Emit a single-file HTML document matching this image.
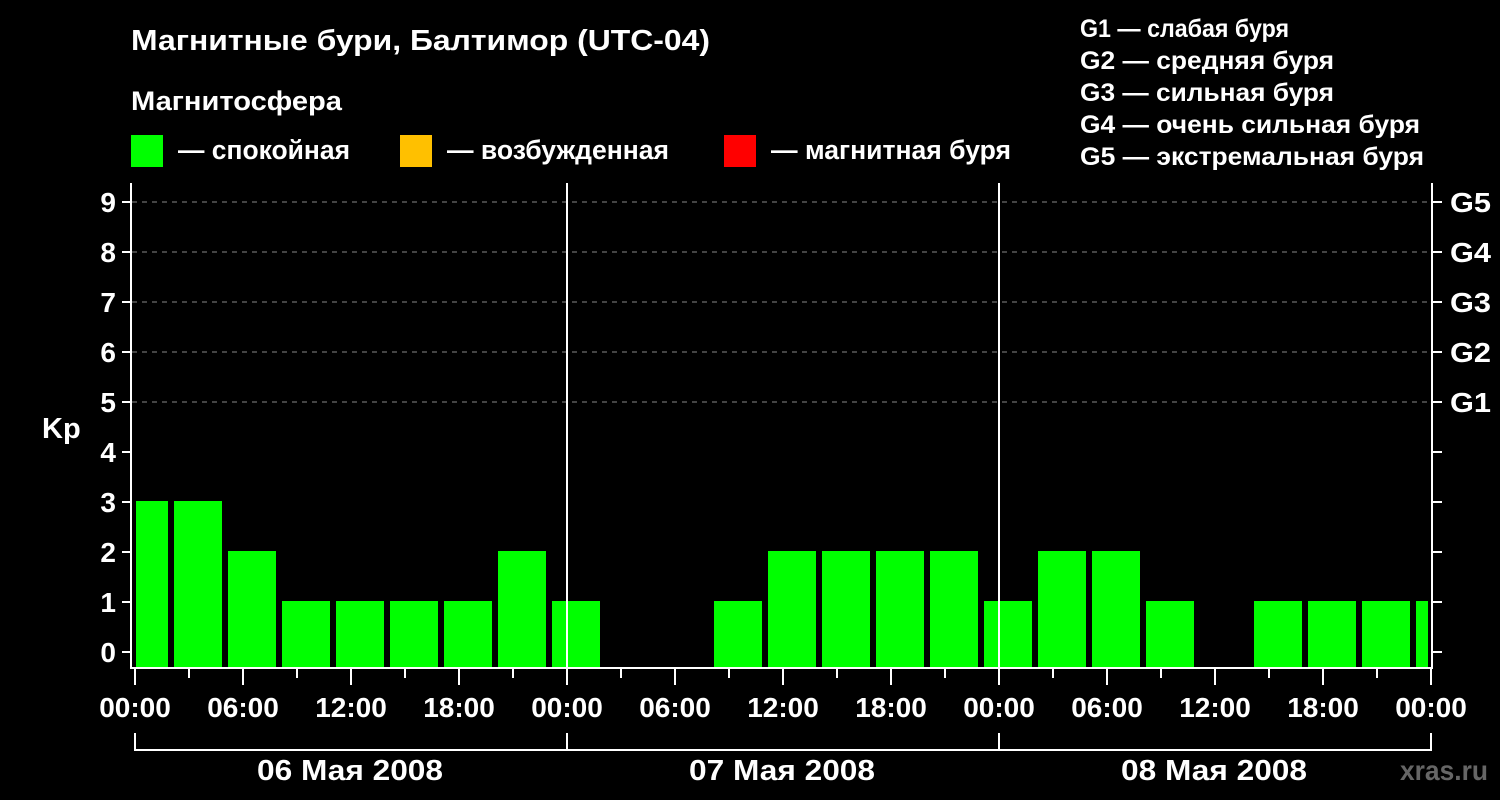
<!DOCTYPE html>
<html><head><meta charset="utf-8"><style>html,body{margin:0;padding:0;background:#000;width:1500px;height:800px;overflow:hidden}</style></head><body>
<svg width="1500" height="800" xmlns="http://www.w3.org/2000/svg" font-family="Liberation Sans, sans-serif" font-weight="bold" fill="#fff">
<rect width="1500" height="800" fill="#000"/>
<text x="131" y="50" font-size="29" textLength="579" lengthAdjust="spacingAndGlyphs">Магнитные бури, Балтимор (UTC-04)</text>
<text x="131" y="110" font-size="27" textLength="211" lengthAdjust="spacingAndGlyphs">Магнитосфера</text>
<rect x="131" y="135" width="32" height="32" fill="#00ff00"/>
<text x="178" y="159" font-size="27" textLength="172" lengthAdjust="spacingAndGlyphs">— спокойная</text>
<rect x="400" y="135" width="32" height="32" fill="#ffc000"/>
<text x="447" y="159" font-size="27" textLength="222" lengthAdjust="spacingAndGlyphs">— возбужденная</text>
<rect x="724" y="135" width="32" height="32" fill="#ff0000"/>
<text x="771" y="159" font-size="27" textLength="240" lengthAdjust="spacingAndGlyphs">— магнитная буря</text>
<g font-size="25">
<text x="1080" y="37" textLength="209" lengthAdjust="spacingAndGlyphs">G1 — слабая буря</text>
<text x="1080" y="69" textLength="254" lengthAdjust="spacingAndGlyphs">G2 — средняя буря</text>
<text x="1080" y="101" textLength="254" lengthAdjust="spacingAndGlyphs">G3 — сильная буря</text>
<text x="1080" y="133" textLength="340" lengthAdjust="spacingAndGlyphs">G4 — очень сильная буря</text>
<text x="1080" y="165" textLength="344" lengthAdjust="spacingAndGlyphs">G5 — экстремальная буря</text>
</g>
<g stroke="#888" stroke-width="1" stroke-dasharray="5,5">
<line x1="132" y1="202" x2="1432" y2="202"/><line x1="132" y1="252" x2="1432" y2="252"/><line x1="132" y1="302" x2="1432" y2="302"/><line x1="132" y1="352" x2="1432" y2="352"/><line x1="132" y1="402" x2="1432" y2="402"/>
</g>
<g fill="#00ff00">
<rect x="136" y="501" width="32" height="167"/>
<rect x="174" y="501" width="48" height="167"/>
<rect x="228" y="551" width="48" height="117"/>
<rect x="282" y="601" width="48" height="67"/>
<rect x="336" y="601" width="48" height="67"/>
<rect x="390" y="601" width="48" height="67"/>
<rect x="444" y="601" width="48" height="67"/>
<rect x="498" y="551" width="48" height="117"/>
<rect x="552" y="601" width="48" height="67"/>
<rect x="714" y="601" width="48" height="67"/>
<rect x="768" y="551" width="48" height="117"/>
<rect x="822" y="551" width="48" height="117"/>
<rect x="876" y="551" width="48" height="117"/>
<rect x="930" y="551" width="48" height="117"/>
<rect x="984" y="601" width="48" height="67"/>
<rect x="1038" y="551" width="48" height="117"/>
<rect x="1092" y="551" width="48" height="117"/>
<rect x="1146" y="601" width="48" height="67"/>
<rect x="1254" y="601" width="48" height="67"/>
<rect x="1308" y="601" width="48" height="67"/>
<rect x="1362" y="601" width="48" height="67"/>
<rect x="1416" y="601" width="12" height="67"/>
</g>
<g stroke="#fff" stroke-width="2" fill="none">
<polyline points="131,668 131,183"/>
<line x1="130" y1="668" x2="1433" y2="668"/>
<line x1="1432" y1="183" x2="1432" y2="668"/>
<line x1="567" y1="183" x2="567" y2="668"/>
<line x1="999" y1="183" x2="999" y2="668"/>
<line x1="122" y1="202" x2="131" y2="202"/><line x1="122" y1="252" x2="131" y2="252"/><line x1="122" y1="302" x2="131" y2="302"/><line x1="122" y1="352" x2="131" y2="352"/><line x1="122" y1="402" x2="131" y2="402"/><line x1="122" y1="452" x2="131" y2="452"/><line x1="122" y1="502" x2="131" y2="502"/><line x1="122" y1="552" x2="131" y2="552"/><line x1="122" y1="602" x2="131" y2="602"/><line x1="122" y1="652" x2="131" y2="652"/>
<line x1="1432" y1="202" x2="1442" y2="202"/><line x1="1432" y1="252" x2="1442" y2="252"/><line x1="1432" y1="302" x2="1442" y2="302"/><line x1="1432" y1="352" x2="1442" y2="352"/><line x1="1432" y1="402" x2="1442" y2="402"/><line x1="1432" y1="452" x2="1442" y2="452"/><line x1="1432" y1="502" x2="1442" y2="502"/><line x1="1432" y1="552" x2="1442" y2="552"/><line x1="1432" y1="602" x2="1442" y2="602"/><line x1="1432" y1="652" x2="1442" y2="652"/>
<path d="M135,669v16M189,669v9M243,669v16M297,669v9M351,669v16M405,669v9M459,669v16M513,669v9M567,669v16M621,669v9M675,669v16M729,669v9M783,669v16M837,669v9M891,669v16M945,669v9M999,669v16M1053,669v9M1107,669v16M1161,669v9M1215,669v16M1269,669v9M1323,669v16M1377,669v9M1431,669v16"/>
<path d="M135,733v17h1296v-17M567,733v17M999,733v17"/>
</g>
<g font-size="28" text-anchor="end">
<text x="116" y="212">9</text><text x="116" y="262">8</text><text x="116" y="312">7</text><text x="116" y="362">6</text><text x="116" y="412">5</text><text x="116" y="462">4</text><text x="116" y="512">3</text><text x="116" y="562">2</text><text x="116" y="612">1</text><text x="116" y="662">0</text>
</g>
<text x="42" y="438" font-size="29">Kp</text>
<g font-size="28">
<text x="1450" y="212" textLength="41" lengthAdjust="spacingAndGlyphs">G5</text><text x="1450" y="262" textLength="41" lengthAdjust="spacingAndGlyphs">G4</text><text x="1450" y="312" textLength="41" lengthAdjust="spacingAndGlyphs">G3</text><text x="1450" y="362" textLength="41" lengthAdjust="spacingAndGlyphs">G2</text><text x="1450" y="412" textLength="41" lengthAdjust="spacingAndGlyphs">G1</text>
</g>
<g font-size="28" text-anchor="middle">
<text x="135" y="717">00:00</text><text x="243" y="717">06:00</text><text x="351" y="717">12:00</text><text x="459" y="717">18:00</text>
<text x="567" y="717">00:00</text><text x="675" y="717">06:00</text><text x="783" y="717">12:00</text><text x="891" y="717">18:00</text>
<text x="999" y="717">00:00</text><text x="1107" y="717">06:00</text><text x="1215" y="717">12:00</text><text x="1323" y="717">18:00</text>
<text x="1431" y="717">00:00</text>
</g>
<g font-size="29">
<text x="257" y="780" textLength="186" lengthAdjust="spacingAndGlyphs">06 Мая 2008</text><text x="689" y="780" textLength="186" lengthAdjust="spacingAndGlyphs">07 Мая 2008</text><text x="1121" y="780" textLength="186" lengthAdjust="spacingAndGlyphs">08 Мая 2008</text>
</g>
<text x="1400" y="780" font-size="28" fill="#666" textLength="88" lengthAdjust="spacingAndGlyphs">xras.ru</text>
</svg>
</body></html>
